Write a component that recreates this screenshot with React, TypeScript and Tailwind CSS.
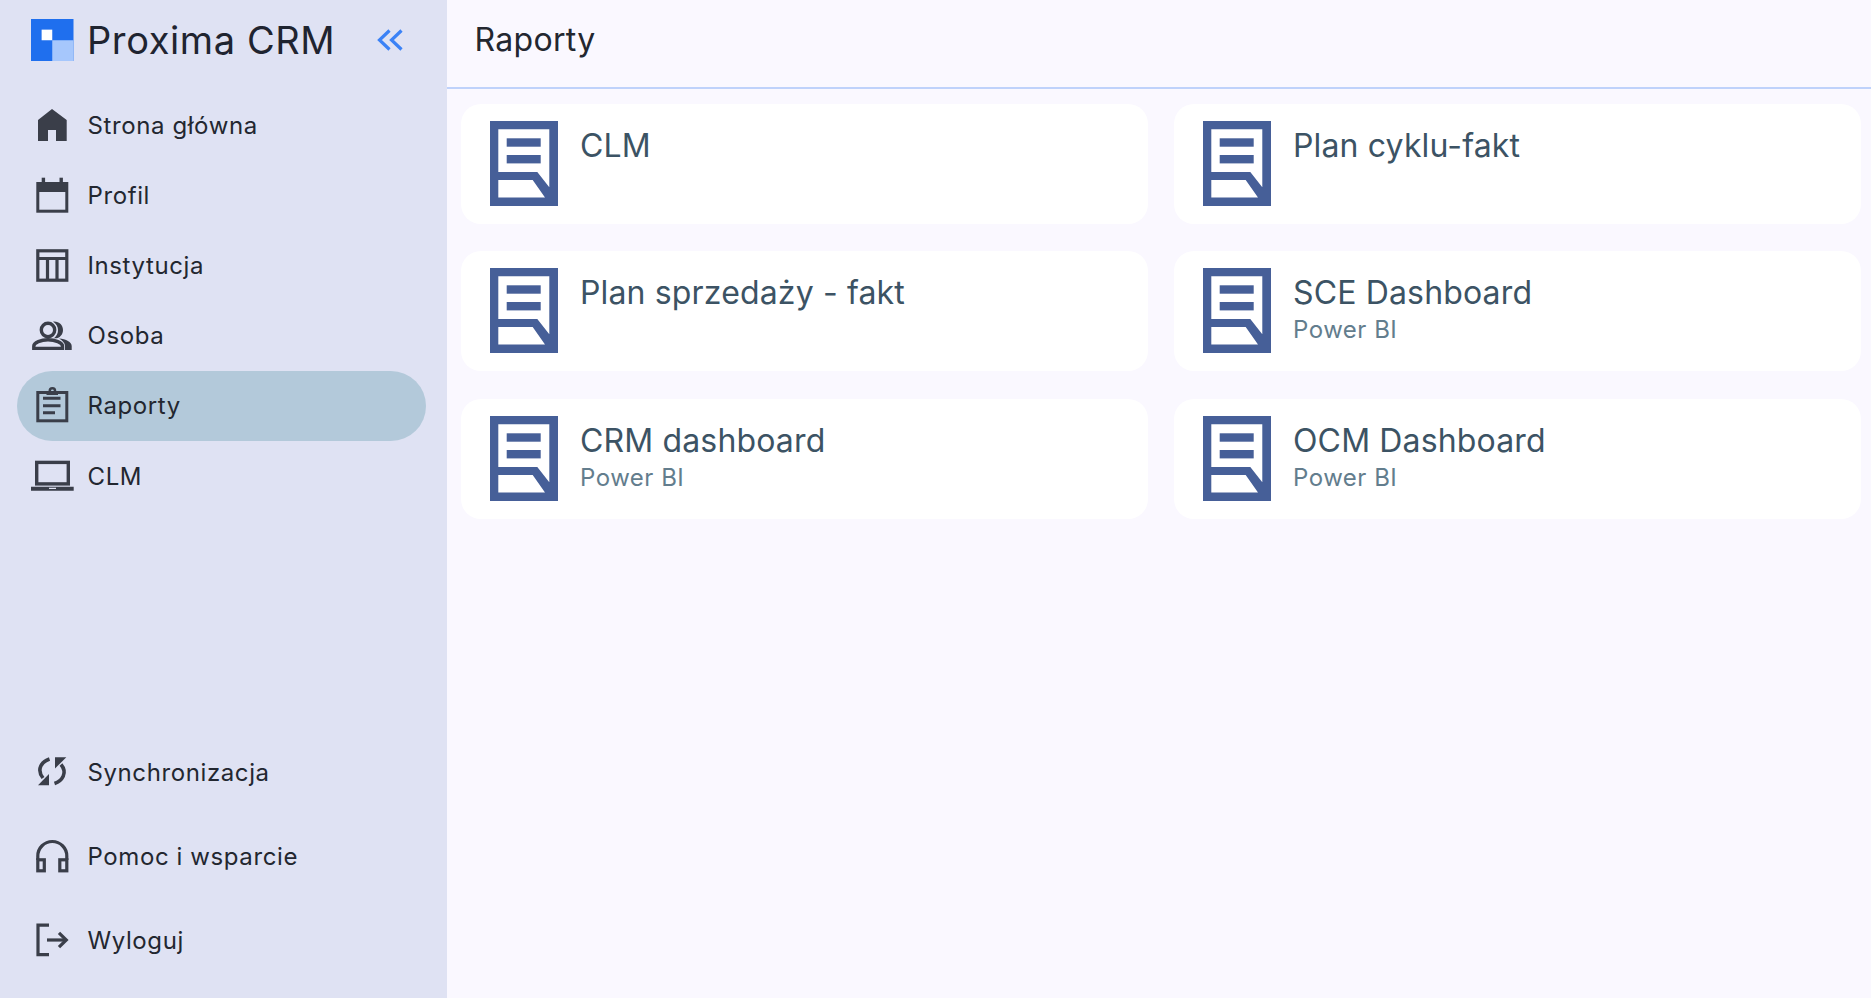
import type { ReactNode } from "react"

const icons: Record<string, ReactNode> = {
  home: <path fill="currentColor" d="M20 4 L34.7 15 V36 H24 V25 H16 V36 H6 V15 Z" />,
  calendar: (
    <>
      <rect x="5.8" y="8.5" width="29" height="27.7" fill="none" stroke="currentColor" strokeWidth="3" />
      <rect x="5" y="8" width="31" height="9" fill="currentColor" />
      <rect x="9.7" y="2.7" width="3.4" height="6" fill="currentColor" />
      <rect x="27.5" y="2.7" width="3.4" height="6" fill="currentColor" />
    </>
  ),
  table: (
    <g fill="none" stroke="currentColor" strokeWidth="3.2">
      <rect x="5.8" y="5.8" width="29" height="29.4" />
      <path d="M5.8 13.5 H34.8 M15.5 13.5 V35 M25 13.5 V35" />
    </g>
  ),
  people: (
    <>
      <circle cx="16" cy="14" r="6.7" fill="none" stroke="currentColor" strokeWidth="3.4" />
      <path fill="currentColor" d="M21 5.6 C27 5 31 9 31 14 C31 19 27 23 22 22.2 C25 19.5 26 17 26 14 C26 11 24.5 8 21 5.6 Z" />
      <path fill="none" stroke="currentColor" strokeWidth="3.4" d="M1.8 32.4 V30 C1.8 26.5 9 23.8 16 23.8 C23 23.8 30.5 26.5 30.5 30 V32.4 Z" />
      <path fill="currentColor" d="M27 22.5 C34 23 39.7 26 39.7 30 V34 H33 V30 C33 27 30.5 24.5 27 22.5 Z" />
    </>
  ),
  clipboard: (
    <>
      <rect x="5.8" y="6.5" width="29" height="28.3" fill="none" stroke="currentColor" strokeWidth="3" />
      <path fill="currentColor" fillRule="evenodd" d="M14.5 5 H16.5 A3.9 3.9 0 0 1 24.3 5 H26 V9 H14.5 Z M19 5 A1.4 1.4 0 0 0 21.8 5 A1.4 1.4 0 0 0 19 5 Z" />
      <path stroke="currentColor" strokeWidth="3" d="M11 12.3 H28.5 M11 19.7 H28.5 M11 26.7 H23" />
    </>
  ),
  laptop: (
    <>
      <rect x="4.7" y="6.4" width="31.6" height="21.5" fill="none" stroke="currentColor" strokeWidth="3.4" />
      <path fill="currentColor" fillRule="evenodd" d="M-1 30.7 H41.7 V34.7 H-1 Z M17 31.7 V32.9 H24 V31.7 Z" />
    </>
  ),
  sync: (
    <>
      <g fill="none" stroke="currentColor" strokeWidth="3.6">
        <path d="M17.5 7 C10 9.5 4 17 11 26" />
        <path d="M22.5 31.5 C30 29 36 21 29 12.5" />
      </g>
      <path fill="currentColor" d="M17 22 V33.3 H6 Z" />
      <path fill="currentColor" d="M23 5.3 H34.3 L23 16.5 Z" />
    </>
  ),
  headset: (
    <g fill="none" stroke="currentColor" strokeWidth="3.2">
      <path d="M5.8 24 V20 A14.5 14.5 0 0 1 34.8 20 V24" />
      <rect x="5.8" y="23.8" width="6.5" height="11" />
      <rect x="27.8" y="23.8" width="7" height="11" />
    </g>
  ),
  logout: (
    <g fill="none" stroke="currentColor" strokeWidth="3.2">
      <path d="M17 5.2 H6 V34.6 H17" />
      <path d="M15 20 H34" />
      <path d="M27 12.8 L34.3 20 L27 27.2" />
    </g>
  ),
}

const topLinks = [
  { icon: "home", label: "Strona główna" },
  { icon: "calendar", label: "Profil" },
  { icon: "table", label: "Instytucja" },
  { icon: "people", label: "Osoba" },
  { icon: "clipboard", label: "Raporty", active: true },
  { icon: "laptop", label: "CLM" },
]

const bottomLinks = [
  { icon: "sync", label: "Synchronizacja" },
  { icon: "headset", label: "Pomoc i wsparcie" },
  { icon: "logout", label: "Wyloguj" },
]

const reports = [
  { title: "CLM" },
  { title: "Plan cyklu-fakt" },
  { title: "Plan sprzedaży - fakt" },
  { title: "SCE Dashboard", sub: "Power BI" },
  { title: "CRM dashboard", sub: "Power BI" },
  { title: "OCM Dashboard", sub: "Power BI" },
]

function NavIcon({ name }: { name: string }) {
  return (
    <svg viewBox="0 0 40 40" className="h-10 w-10 shrink-0 overflow-visible text-[#3a3e49]">
      {icons[name]}
    </svg>
  )
}

function NavItem({ icon, label, active, tall }: { icon: string; label: string; active?: boolean; tall?: boolean }) {
  return (
    <a
      href="#"
      className={`flex items-center gap-[15.5px] rounded-full pl-[15px] text-[24px] tracking-[0.6px] text-[#232730] ${
        tall ? "h-[84px]" : "h-[70.2px]"
      } ${active ? "bg-[#b3c9da]" : ""}`}
    >
      <NavIcon name={icon} />
      <span className="pt-px">{label}</span>
    </a>
  )
}

function ReportIcon() {
  return (
    <svg viewBox="0 0 68 85" className="h-[85px] w-[68px] shrink-0 text-[#465f98]">
      <path
        fill="currentColor"
        fillRule="evenodd"
        d="M0 0 H68 V85 H0 Z M8.3 8.3 V51 H47.3 L59.3 66.3 V8.3 Z M8.3 59 V76.4 H55 L42.7 59 Z"
      />
      <rect x="16.7" y="17.3" width="34" height="8.4" fill="currentColor" />
      <rect x="16.7" y="34" width="34" height="8.4" fill="currentColor" />
    </svg>
  )
}

export default function App() {
  return (
    <div className="flex h-[998px] w-full overflow-hidden bg-[#faf8ff] font-['Inter',sans-serif]">
      {/* Sidebar */}
      <aside className="flex w-[446.5px] shrink-0 flex-col bg-[#dfe2f3] pb-4 pl-[17px] pr-[21px]">
        <div className="flex h-[90px] shrink-0 items-center pb-[10px] pl-[14px]">
          <svg viewBox="0 0 42 42" className="h-[42.5px] w-[42.5px] shrink-0">
            <rect width="42" height="42" fill="#1f6fee" />
            <rect x="21" y="21" width="21" height="21" fill="#a6c7fc" />
            <rect x="10.5" y="10.5" width="10.5" height="10.5" fill="#ffffff" />
          </svg>
          <span className="ml-[13.5px] text-[38px] tracking-[0.6px] text-[#1f2430]">Proxima CRM</span>
          <svg viewBox="0 0 26 22" fill="none" stroke="#3b82f6" strokeWidth="3.2" className="ml-[42px] h-[22px] w-[26px]">
            <path d="M12.5 1.5 L2.5 11 L12.5 20.5 M24.5 1.5 L14.5 11 L24.5 20.5" />
          </svg>
        </div>
        <nav className="flex flex-col">
          {topLinks.map((link) => (
            <NavItem key={link.label} {...link} />
          ))}
        </nav>
        <nav className="mt-auto flex flex-col">
          {bottomLinks.map((link) => (
            <NavItem key={link.label} {...link} tall />
          ))}
        </nav>
      </aside>

      {/* Main */}
      <main className="flex min-w-0 flex-1 flex-col">
        <header className="flex h-[89px] shrink-0 items-center border-b-2 border-[#bfd2fb] pb-[8px] pl-[28px]">
          <h1 className="text-[32px] tracking-[0.3px] text-[#232730]">Raporty</h1>
        </header>
        <div className="grid grid-cols-2 gap-x-[26px] gap-y-[27.3px] pl-[14px] pr-[10.5px] pt-[15px]">
          {reports.map((report) => (
            <div key={report.title} className="flex h-[120px] gap-[22.5px] rounded-[20px] bg-white pl-[29px] pt-[17px]">
              <ReportIcon />
              <div className="pt-[5px]">
                <div className="text-[32px] leading-[40px] tracking-[0.15px] text-[#3c5364]">{report.title}</div>
                {report.sub && <div className="text-[24px] leading-[34px] tracking-[0.5px] text-[#637d8d]">{report.sub}</div>}
              </div>
            </div>
          ))}
        </div>
      </main>
    </div>
  )
}
